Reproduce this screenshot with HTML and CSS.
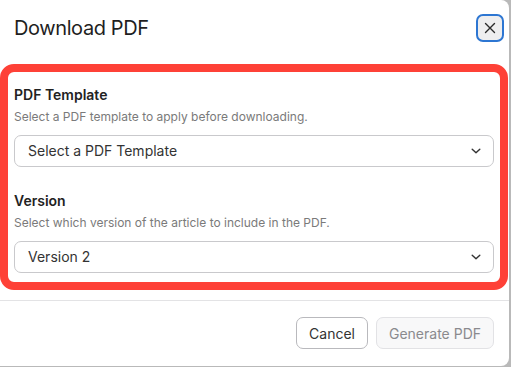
FILE: index.html
```html
<!DOCTYPE html>
<html lang="en">
<head>
    <meta charset="UTF-8">
    <meta name="viewport" content="width=device-width, initial-scale=1.0">
    <title>Download PDF</title>
    <link rel="stylesheet" href="styles.css">
</head>
<body>
<div class="dialog">
    <div class="dialog-header">
        <h1 class="dialog-title">Download PDF</h1>
        <button class="close-button" aria-label="Close">
            <svg width="12" height="12" viewBox="0 0 12 12">
                <path d="M1.5 1.5l9 9M10.5 1.5l-9 9" stroke="#2b2b2b" stroke-width="1.4" stroke-linecap="round"/>
            </svg>
        </button>
    </div>

    <div class="dialog-body">
        <div class="field">
            <div class="field-label">PDF Template</div>
            <div class="field-help">Select a PDF template to apply before downloading.</div>
            <div class="select">
                <span>Select a PDF Template</span>
                <svg width="10" height="6" viewBox="0 0 10 6">
                    <path d="M1.2 1.2l3.8 3.6 3.8-3.6" fill="none" stroke="#333" stroke-width="1.4" stroke-linecap="round" stroke-linejoin="round"/>
                </svg>
            </div>
        </div>
        <div class="field">
            <div class="field-label">Version</div>
            <div class="field-help">Select which version of the article to include in the PDF.</div>
            <div class="select">
                <span>Version 2</span>
                <svg width="10" height="6" viewBox="0 0 10 6">
                    <path d="M1.2 1.2l3.8 3.6 3.8-3.6" fill="none" stroke="#333" stroke-width="1.4" stroke-linecap="round" stroke-linejoin="round"/>
                </svg>
            </div>
        </div>
    </div>

    <div class="dialog-footer">
        <button class="footer-button">Cancel</button>
        <button class="footer-button disabled" disabled>Generate PDF</button>
    </div>
</div>
</body>
</html>
```

FILE: styles.css
```css
body {
    font-family: Inter, "Noto Sans", sans-serif;
    margin: 0;
    background-color: #b9b9b9;
    height: 367px;
    overflow: hidden;
}

.dialog {
    width: 509px;
    height: 366px;
    background-color: white;
    border-radius: 0 8px 8px 0;
    box-sizing: border-box;
    display: flex;
    flex-direction: column;
}

.dialog-header {
    display: flex;
    align-items: center;
    justify-content: space-between;
    padding: 14px 5px 0 14px;
    height: 28px;
}

.dialog-title {
    margin: 0;
    font-size: 20px;
    line-height: 28px;
    font-weight: 400;
    letter-spacing: -0.4px;
    color: #1f1f1f;
}

.close-button {
    width: 28px;
    height: 28px;
    padding: 0;
    display: flex;
    align-items: center;
    justify-content: center;
    background-color: #eeeeef;
    border: 2px solid #2d76d2;
    border-radius: 7px;
}

.dialog-body {
    margin: 22px 1px 0 0;
    border: 8px solid #fe4137;
    border-radius: 14px;
    padding: 13px 6px 9px 6px;
    display: flex;
    flex-direction: column;
    gap: 24px;
}

.field-label {
    font-size: 14px;
    line-height: 20px;
    font-weight: 600;
    color: #222;
}

.field-help {
    margin-top: 4px;
    font-size: 12px;
    line-height: 16px;
    color: #7a7a7a;
}

.select {
    margin-top: 10px;
    height: 32px;
    box-sizing: border-box;
    border: 1px solid #c9c9cc;
    border-radius: 7px;
    display: flex;
    align-items: center;
    justify-content: space-between;
    padding: 0 12px 0 13px;
    font-size: 14px;
    line-height: 20px;
    color: #333;
}

.dialog-footer {
    margin-top: 10px;
    border-top: 1px solid #e3e3e5;
    padding: 16px 15px 0 0;
    display: flex;
    justify-content: flex-end;
    gap: 8px;
}

.footer-button {
    height: 32px;
    padding: 0 12px;
    font-family: inherit;
    font-size: 14px;
    color: #333;
    background-color: white;
    border: 1px solid #b9b9bd;
    border-radius: 7px;
}

.footer-button.disabled {
    color: #8a8a8e;
    background-color: #f8f8f9;
    border-color: #e2e2e5;
}
```
